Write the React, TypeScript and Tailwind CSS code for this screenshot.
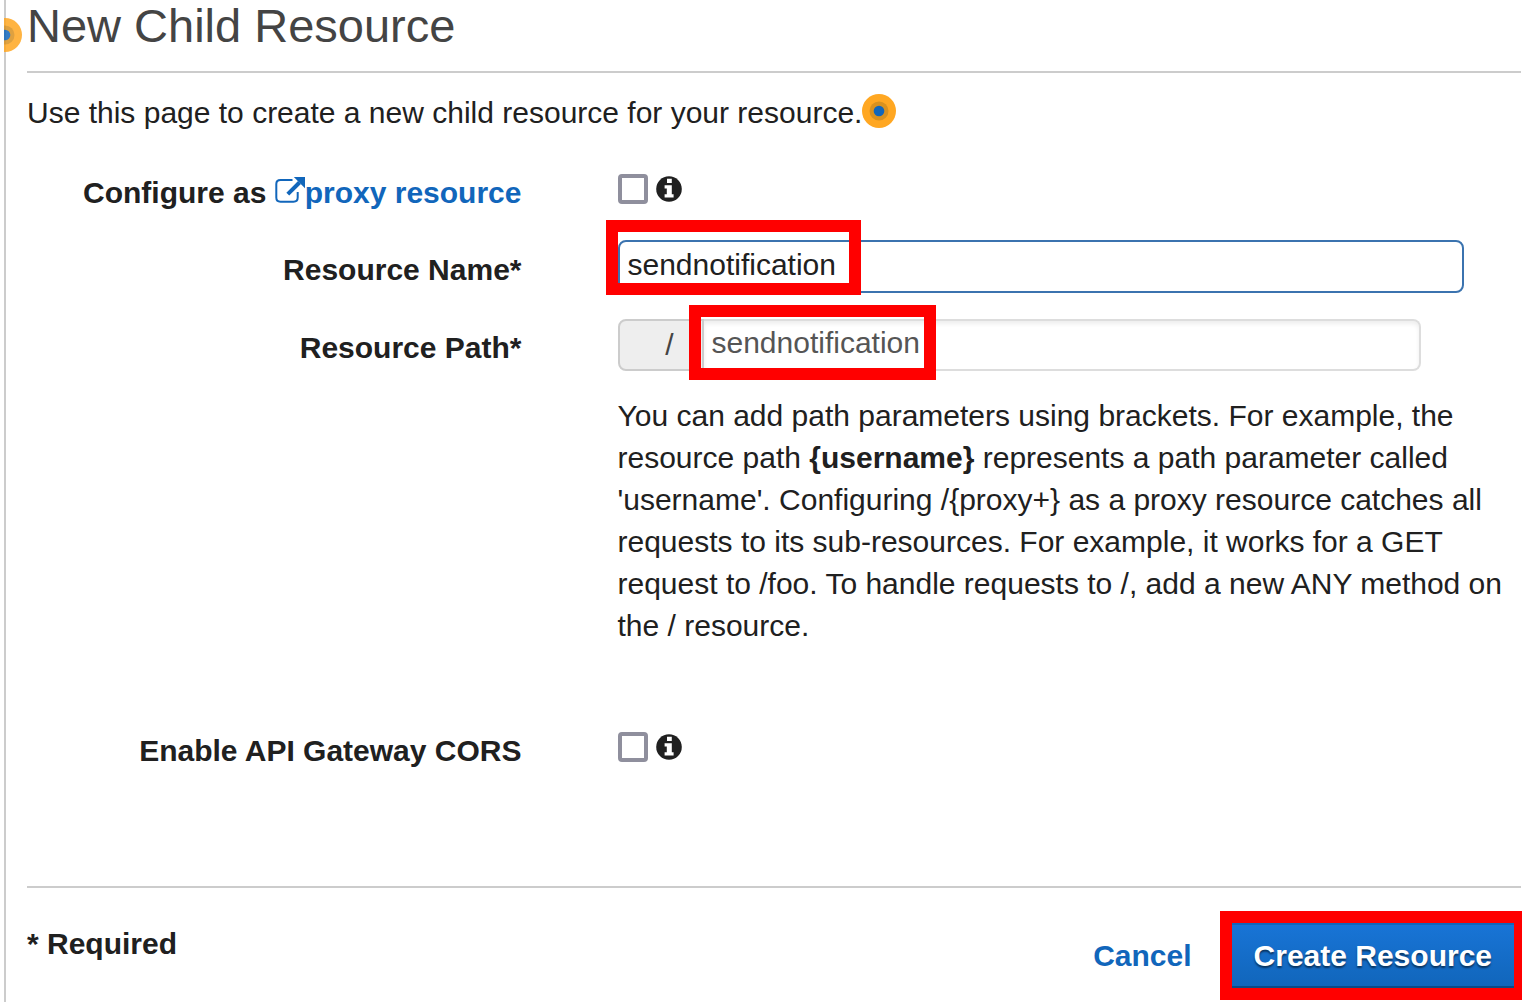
import { useState } from "react";
import type { ReactNode } from "react";

function Beacon({ className = "" }: { className?: string }) {
  return (
    <svg className={className} width="34" height="34" viewBox="0 0 34 34" aria-hidden="true">
      <circle cx="17" cy="17" r="17" fill="#ffa722" />
      <circle cx="17" cy="17" r="9.5" fill="#d9911f" />
      <circle cx="17" cy="17" r="5.3" fill="#1166bb" />
    </svg>
  );
}

function InfoIcon() {
  return (
    <svg width="26" height="26" viewBox="0 0 26 26" aria-hidden="true">
      <circle cx="13" cy="13" r="12.8" fill="#202020" />
      <path d="M11 2.800h4.800v4.200H11zM8.600 9.200h7.200v9h1.800v3.200H8.600v-3.200h2.200v-5.800H8.600z" fill="#fff" />
    </svg>
  );
}

function ExternalIcon() {
  return (
    <svg className="inline-block align-baseline" width="30" height="26" viewBox="0 0 30 26" aria-hidden="true">
      <path
        d="M17.5 3H5.5Q1.3 3 1.3 7v13.5Q1.3 24.700 5.500 24.700H18.500Q22.700 24.700 22.700 20.500V15"
        fill="none"
        stroke="#1166bb"
        strokeWidth="2"
      />
      <path d="M12.800 17.200 24.500 5.500" stroke="#1166bb" strokeWidth="4" fill="none" />
      <path d="M18.800 0H30V11.200z" fill="#1166bb" />
    </svg>
  );
}

function Check({ id }: { id: string }) {
  return (
    <div className="flex items-center gap-2 pt-2">
      <input
        id={id}
        type="checkbox"
        className="size-[30px] appearance-none rounded border-4 border-[#8f8f9d] bg-white checked:bg-[#1166bb]"
      />
      <InfoIcon />
    </div>
  );
}

function Label({ htmlFor, children }: { htmlFor: string; children: ReactNode }) {
  return (
    <label htmlFor={htmlFor} className="pt-1.5 text-right font-bold">
      {children}
    </label>
  );
}

export default function App() {
  const [name, setName] = useState("sendnotification");
  const [path, setPath] = useState("sendnotification");

  return (
    <div className="min-h-screen overflow-hidden bg-white pl-1 font-['Liberation_Sans',Arial,sans-serif] text-[30px] leading-[42px] text-[#202020]">
      <main className="relative min-h-screen border-l-2 border-[#ccc] pr-px pl-[21px]">
        <div className="absolute top-[18px] left-[-2px] h-[34px] w-[18px] overflow-hidden opacity-85">
          <Beacon className="-ml-4 max-w-none" />
        </div>
        <h1 className="border-b-2 border-[#ccc] pb-[19px] text-[47px] leading-[52px] text-[#444]">New Child Resource</h1>
        <div className="mt-[19px] flex items-start">
          <p>Use this page to create a new child resource for your resource.</p>
          <Beacon className="mt-0.5 shrink-0" />
        </div>

        <form onSubmit={(e) => e.preventDefault()}>
          <div className="mt-8 grid grid-cols-[33.1%_1fr] items-start gap-x-24">
            <Label htmlFor="proxy">
              Configure as{" "}
              <a href="#proxy" className="text-[#1166bb]">
                <ExternalIcon />
                proxy resource
              </a>
            </Label>
            <Check id="proxy" />
          </div>

          <div className="mt-[26px] grid grid-cols-[33.1%_1fr] items-center gap-x-24">
            <Label htmlFor="name">Resource Name*</Label>
            <div className="relative mr-[57px]">
              <input
                id="name"
                value={name}
                onChange={(e) => setName(e.target.value)}
                className="block h-[53px] w-full rounded-lg border-2 border-[#3b73af] px-2 pb-1 outline-none"
              />
              <div className="pointer-events-none absolute -top-5 -left-3 h-[75px] w-[255px] border-12 border-[#f00]" />
            </div>
          </div>

          <div className="mt-[26px] grid grid-cols-[33.1%_1fr] items-center gap-x-24">
            <Label htmlFor="path">Resource Path*</Label>
            <div className="relative mr-[100px] flex h-[52px]">
              <span className="flex w-[86px] items-center justify-end rounded-l-lg border-2 border-[#ccc] bg-[#eee] pr-7 text-[#444]">
                /
              </span>
              <input
                id="path"
                value={path}
                onChange={(e) => setPath(e.target.value)}
                className="min-w-0 flex-1 rounded-r-lg border-2 border-l-0 border-[#ddd] px-2 pb-1 text-[#555] shadow-[inset_0_3px_4px_#00000012] outline-none"
              />
              <div className="pointer-events-none absolute -top-3.5 left-[71px] h-[75px] w-[247px] border-12 border-[#f00]" />
            </div>
          </div>

          <div className="mt-6 grid grid-cols-[33.1%_1fr] gap-x-24">
            <p className="col-start-2">
              You can add path parameters using brackets. For example, the resource path <b>{"{username}"}</b>
              {" represents a path parameter called 'username'. Configuring /{proxy+} as a proxy resource catches all requests to its sub-resources. For example, it works for a GET request to /foo. To handle requests to /, add a new ANY method on the / resource."}
            </p>
          </div>

          <div className="mt-[77px] grid grid-cols-[33.1%_1fr] items-start gap-x-24">
            <Label htmlFor="cors">Enable API Gateway CORS</Label>
            <Check id="cors" />
          </div>

          <footer className="mt-[114px] flex items-start justify-between border-t-2 border-[#ccc] pt-[35px] pr-[7px] font-bold">
            <p>* Required</p>
            <div className="flex items-center gap-10">
              <button type="button" className="text-[#1166bb]">
                Cancel
              </button>
              <div className="relative">
                <button
                  type="submit"
                  className="h-[65px] border-y-2 border-t-[#1166bb] border-b-[#0d4a85] bg-linear-to-b from-[#1874d6] to-[#1166bb] px-[22px] text-white [text-shadow:0_2px_2px_#0008]"
                >
                  Create Resource
                </button>
                <div className="pointer-events-none absolute -inset-3 border-12 border-[#f00]" />
              </div>
            </div>
          </footer>
        </form>
      </main>
    </div>
  );
}
